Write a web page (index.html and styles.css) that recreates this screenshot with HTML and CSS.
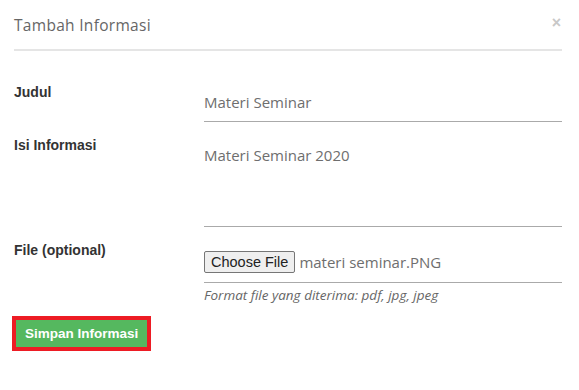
FILE: index.html
```html
<!DOCTYPE html>
<html lang="id">
<head>
    <meta charset="UTF-8">
    <meta name="viewport" content="width=device-width, initial-scale=1.0">
    <title>Tambah Informasi</title>
    <link rel="stylesheet" href="styles.css">
</head>
<body>

<div class="modal">
    <div class="modal-header">
        <h4 class="modal-title">Tambah Informasi</h4>
        <span class="close">&times;</span>
    </div>

    <form class="modal-body" action="" onsubmit="return false">
        <div class="form-row">
            <label class="form-label" for="judul">Judul</label>
            <input class="form-input" type="text" id="judul" name="judul" value="Materi Seminar">
        </div>

        <div class="form-row">
            <label class="form-label" for="isi">Isi Informasi</label>
            <textarea class="form-input form-textarea" id="isi" name="isi">Materi Seminar 2020</textarea>
        </div>

        <div class="form-row">
            <label class="form-label">File (optional)</label>
            <div class="form-control">
                <div class="file-field">
                    <button type="button" class="file-button">Choose File</button>
                    <span class="file-name">materi seminar.PNG</span>
                </div>
                <p class="help-text">Format file yang diterima: pdf, jpg, jpeg</p>
            </div>
        </div>

        <div class="actions">
            <button type="submit" class="btn-simpan">Simpan Informasi</button>
        </div>
    </form>
</div>

</body>
</html>
```

FILE: styles.css
```css
/* Modal tambah informasi */
body {
    margin: 0;
    padding: 0;
    background: #fff;
    font-family: "Liberation Sans", Arial, sans-serif;
    color: #333;
}
.modal {
    padding: 0 17px 0 14px;
}
.modal-header {
    display: flex;
    justify-content: space-between;
    align-items: flex-start;
    height: 49px;
    border-bottom: 2px solid #e5e5e5;
}
.modal-title {
    margin: 14px 0 0 0;
    font-family: "Open Sans", sans-serif;
    font-weight: 400;
    font-size: 15.5px;
    color: #666;
    letter-spacing: 0.3px;
}
.close {
    margin: 14px 1px 0 0;
    font-size: 16px;
    font-weight: bold;
    color: #c8c8c8;
}

/* Formulario */
.modal-body {
    padding-top: 32px;
}
.form-row {
    display: flex;
    margin-bottom: 14px;
}
.form-label {
    flex: 0 0 190px;
    padding-top: 2px;
    font-size: 14px;
    font-weight: bold;
    line-height: 15px;
    color: #333;
}
.form-input {
    flex: 1;
    height: 39px;
    box-sizing: border-box;
    margin: 0;
    padding: 0;
    border: 0;
    border-bottom: 1px solid #aaa;
    outline: none;
    font-family: "Open Sans", sans-serif;
    font-size: 15px;
    color: #6e6e6e;
    background: transparent;
}
.form-textarea {
    height: 91px;
    padding-top: 9px;
    resize: none;
    line-height: 20px;
}
.form-control {
    flex: 1;
}
.file-field {
    display: flex;
    align-items: center;
    height: 42px;
    box-sizing: border-box;
    border-bottom: 1px solid #aaa;
}
.file-button {
    height: 22px;
    margin: 0 4px 0 0;
    padding: 0 6px;
    border: 1px solid #767676;
    border-radius: 2px;
    background: #efefef;
    font-family: "Liberation Sans", Arial, sans-serif;
    font-size: 14.5px;
    color: #222;
}
.file-name {
    font-family: "Open Sans", sans-serif;
    font-size: 15px;
    color: #6e6e6e;
}
.help-text {
    margin: 3px 0 0 0;
    font-family: "Open Sans", sans-serif;
    font-style: italic;
    font-size: 13.5px;
    color: #666;
}
.actions {
    margin-top: -2px;
}
.btn-simpan {
    display: block;
    margin-left: -2px;
    padding: 0 9px;
    height: 35px;
    border: 4px solid #ed1c24;
    background: #55b85f;
    font-family: "Liberation Sans", Arial, sans-serif;
    font-size: 13.5px;
    font-weight: bold;
    color: #fff;
}
```
